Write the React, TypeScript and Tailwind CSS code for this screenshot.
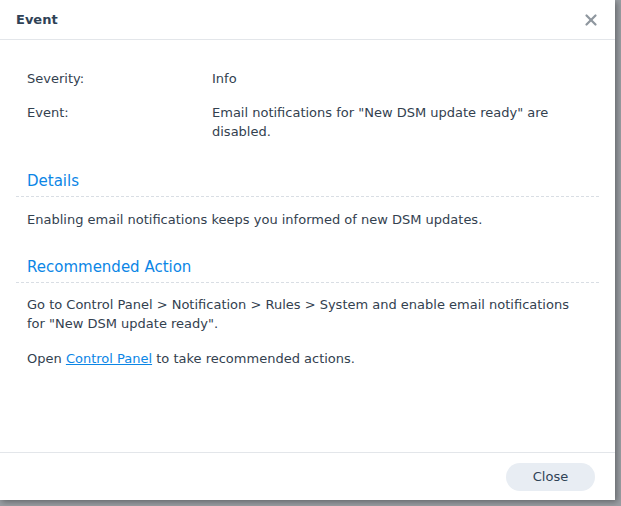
import { X } from "lucide-react";

// ─── Data ────────────────────────────────────────────────────────────────────

const rows = [
  { label: "Severity:", value: "Info" },
  { label: "Event:", value: 'Email notifications for "New DSM update ready" are disabled.' },
];

// ─── Section title ───────────────────────────────────────────────────────────

const SectionTitle = ({ children }: { children: string }) => (
  <div className="border-b border-dashed border-[#d9dee4] pl-[11px] pb-[5px] text-[15px] leading-[20px] text-[#0b86e6]">
    {children}
  </div>
);

export default function App() {
  return (
    <div
      className="w-[621px] h-[506px] bg-[#9a9ea3] overflow-hidden text-[13px] text-[#33414f]"
      style={{ fontFamily: "Verdana, 'DejaVu Sans', sans-serif" }}
    >
      <div className="w-[615px] h-[500px] bg-white flex flex-col shadow-[2px_2px_6px_rgba(0,0,0,0.35)]">
        {/* Header */}
        <div className="h-[40px] shrink-0 flex items-center justify-between pl-[16px] pr-[15px] border-b border-[#e3e6ea]">
          <span className="font-bold text-[13px] text-[#2f4256]">Event</span>
          <X size={18} strokeWidth={3} className="text-[#8f979f]" />
        </div>

        {/* Body */}
        <div className="flex-1 px-[16px] pt-[29px]">
          <div className="pl-[11px] flex flex-col gap-[15px]">
            {rows.map((r) => (
              <div key={r.label} className="flex leading-[19px]">
                <span className="w-[185px] shrink-0">{r.label}</span>
                <span className="w-[370px]">{r.value}</span>
              </div>
            ))}
          </div>

          <div className="mt-[30px]">
            <SectionTitle>Details</SectionTitle>
            <p className="pl-[11px] pt-[13px] leading-[19px]">
              Enabling email notifications keeps you informed of new DSM updates.
            </p>
          </div>

          <div className="mt-[28px]">
            <SectionTitle>Recommended Action</SectionTitle>
            <p className="pl-[11px] pt-[12px] leading-[19px] pr-[16px]">
              Go to Control Panel &gt; Notification &gt; Rules &gt; System and enable email notifications for "New DSM update ready".
            </p>
            <p className="pl-[11px] pt-[16px] leading-[19px]">
              Open{" "}
              <a href="#" className="text-[#0b86e6] underline">
                Control Panel
              </a>{" "}
              to take recommended actions.
            </p>
          </div>
        </div>

        {/* Footer */}
        <div className="h-[48px] shrink-0 border-t border-[#e3e6ea] flex items-center justify-end pr-[20px]">
          <button className="w-[89px] h-[28px] rounded-full bg-[#e8edf3] text-[#2f4256] text-[13px]">
            Close
          </button>
        </div>
      </div>
    </div>
  );
}
